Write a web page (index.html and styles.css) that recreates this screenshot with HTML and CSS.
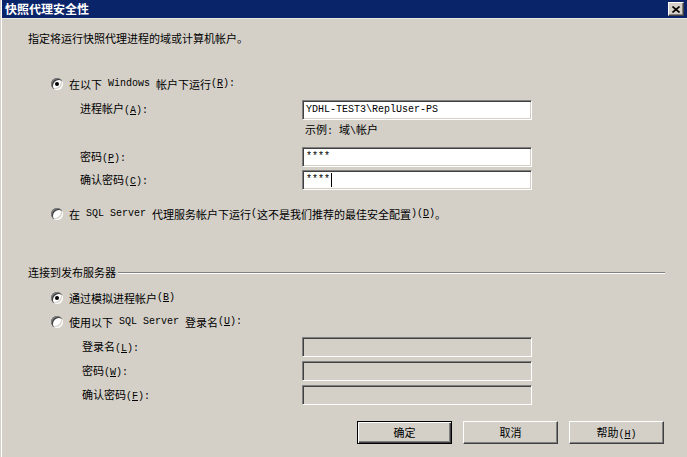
FILE: index.html
```html
<!DOCTYPE html>
<html lang="zh-CN">
<head>
  <meta charset="UTF-8">
  <title>快照代理安全性</title>
  <link rel="stylesheet" href="styles.css">
</head>
<body>
  <div class="window">
    <div class="titlebar">
      <span class="title">快照代理安全性</span>
      <span class="close">
        <svg width="8" height="7" viewBox="0 0 8 7"><path d="M0.5 0.5 L7.5 6.5 M7.5 0.5 L0.5 6.5" stroke="#000" stroke-width="1.6"/></svg>
      </span>
    </div>

    <div class="content">
      <p class="intro">指定将运行快照代理进程的域或计算机帐户。</p>

      <div class="option first"><span class="radio checked"></span>在以下<span class="en"> Windows </span>帐户下运行<span class="en">(<u>R</u>):</span></div>

      <div class="field f1">
        <label class="top">进程帐户<span class="en">(<u>A</u>):</span></label>
        <div class="edit"><span class="en">YDHL-TEST3\ReplUser-PS</span></div>
      </div>
      <div class="hint">示例<span class="en">: </span>域<span class="en">\</span>帐户</div>
      <div class="field f2">
        <label>密码<span class="en">(<u>P</u>):</span></label>
        <div class="edit"><span class="en">****</span></div>
      </div>
      <div class="field f3">
        <label>确认密码<span class="en">(<u>C</u>):</span></label>
        <div class="edit"><span class="en">****</span><span class="caret"></span></div>
      </div>

      <div class="option second"><span class="radio"></span>在<span class="en"> SQL Server </span>代理服务帐户下运行<span class="en">(</span>这不是我们推荐的最佳安全配置<span class="en">)(<u>D</u>)</span>。</div>

      <div class="group">
        <span>连接到发布服务器</span>
        <span class="rule"></span>
      </div>

      <div class="option third"><span class="radio checked"></span>通过模拟进程帐户<span class="en">(<u>B</u>)</span></div>
      <div class="option fourth"><span class="radio"></span>使用以下<span class="en"> SQL Server </span>登录名<span class="en">(<u>U</u>):</span></div>

      <div class="field f4">
        <label>登录名<span class="en">(<u>L</u>):</span></label>
        <div class="edit disabled"></div>
      </div>
      <div class="field f5">
        <label>密码<span class="en">(<u>W</u>):</span></label>
        <div class="edit disabled"></div>
      </div>
      <div class="field f5">
        <label>确认密码<span class="en">(<u>F</u>):</span></label>
        <div class="edit disabled"></div>
      </div>

      <div class="buttons">
        <div class="btn default">确定</div>
        <div class="btn">取消</div>
        <div class="btn">帮助<span class="en">(<u>H</u>)</span></div>
      </div>
    </div>
  </div>
</body>
</html>
```

FILE: styles.css
```css
body {
  margin: 0;
  background-color: #d4d0c8;
  font-family: "Noto Sans CJK SC", sans-serif;
  font-size: 11px;
  color: #000;
  width: 687px;
  height: 457px;
  overflow: hidden;
}
.window {
  margin-left: 1px;
  border-left: 1px solid #fff;
  height: 457px;
}
.en {
  font-family: "Liberation Mono", monospace;
  font-size: 10px;
  white-space: pre;
}
u {
  text-decoration: underline;
  text-underline-offset: 1px;
}

/* title bar */
.titlebar {
  height: 18px;
  background-color: #0a246a;
  display: flex;
  align-items: center;
  justify-content: space-between;
  padding: 0 3px 0 3px;
  border-bottom: 1px solid #e8e6e0;
}
.title {
  color: #fff;
  font-weight: bold;
  font-size: 12px;
  line-height: 18px;
}
.close {
  width: 16px;
  height: 14px;
  box-sizing: border-box;
  background-color: #d4d0c8;
  border: 1px solid;
  border-color: #fff #404040 #404040 #fff;
  box-shadow: inset -1px -1px 0 #808080;
  display: flex;
  align-items: center;
  justify-content: center;
}
.close svg {
  display: block;
}

/* content */
.content {
  padding-left: 26px;
}
.intro {
  margin: 11px 0 0 0;
  height: 16px;
  line-height: 16px;
}
.option {
  display: flex;
  align-items: center;
  height: 16px;
  line-height: 16px;
  padding-left: 23px;
}
.option.first { margin-top: 30px; }
.option.second { margin-top: 16px; }
.option.third { margin-top: 10px; }
.option.fourth { margin-top: 8px; }

.radio {
  position: relative;
  width: 12px;
  height: 12px;
  border-radius: 50%;
  background-color: #fff;
  box-shadow: inset 1px 1px 0 #808080, inset 2px 2px 0 #404040, inset -1px -1px 0 #fff, inset -2px -2px 0 #d4d0c8;
  margin-right: 6px;
  flex-shrink: 0;
}
.radio.checked::after {
  content: "";
  position: absolute;
  left: 4px;
  top: 4px;
  width: 4px;
  height: 4px;
  border-radius: 50%;
  background-color: #000;
}

.field {
  display: flex;
  align-items: center;
  padding-left: 52px;
  height: 20px;
}
.field label {
  width: 222px;
  line-height: 20px;
}
.field label.top {
  align-self: flex-start;
  line-height: 16px;
}
.field.f1 { margin-top: 8px; }
.field.f2 { margin-top: 10px; }
.field.f3 { margin-top: 3px; }
.field.f4 { margin-top: 7px; padding-left: 54px; }
.field.f4 label { width: 220px; }
.field.f5 { margin-top: 4px; padding-left: 54px; }
.field.f5 label { width: 220px; }

.edit {
  width: 230px;
  height: 20px;
  box-sizing: border-box;
  background-color: #fff;
  border: 1px solid;
  border-color: #808080 #fff #fff #808080;
  box-shadow: inset 1px 1px 0 #404040, inset -1px -1px 0 #d4d0c8;
  padding-left: 3px;
  line-height: 18px;
  display: flex;
  align-items: center;
}
.edit.disabled {
  background-color: #d4d0c8;
}
.caret {
  width: 1px;
  height: 14px;
  background-color: #000;
  margin-left: 1px;
}
.hint {
  padding-left: 277px;
  margin-top: 1px;
  height: 16px;
  line-height: 16px;
}

.group {
  display: flex;
  align-items: center;
  margin-top: 42px;
  height: 16px;
  line-height: 16px;
}
.rule {
  flex: 1;
  margin: 1px 22px 0 2px;
  height: 1px;
  background-color: #808080;
  border-bottom: 1px solid #fff;
}

.buttons {
  display: flex;
  gap: 11px;
  margin-top: 16px;
  padding-left: 329px;
}
.btn {
  width: 95px;
  height: 23px;
  box-sizing: border-box;
  background-color: #d4d0c8;
  border: 1px solid;
  border-color: #fff #404040 #404040 #fff;
  box-shadow: inset -1px -1px 0 #808080;
  text-align: center;
  line-height: 20px;
}
.btn.default {
  border: 1px solid #000;
  box-shadow: inset 1px 1px 0 #fff, inset -1px -1px 0 #404040, inset -2px -2px 0 #808080;
}
```
